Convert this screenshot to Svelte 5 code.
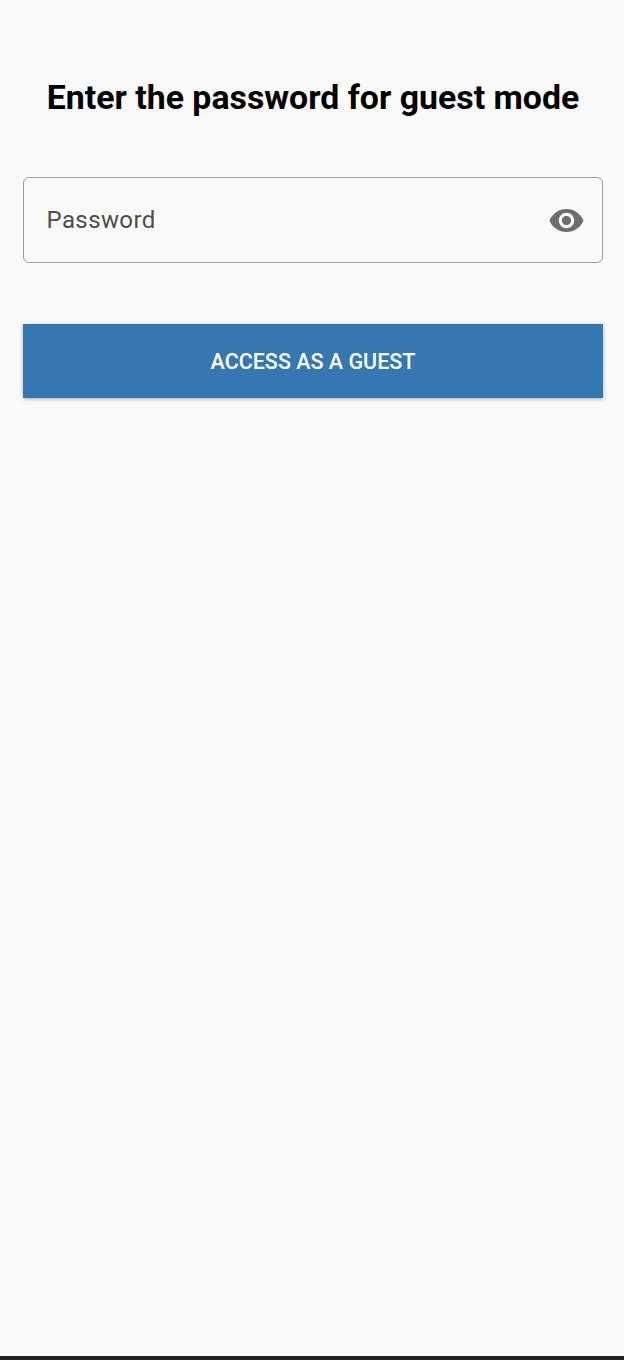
<script>
  let password = "";
  let visible = false;
</script>

<div class="screen">
  <main class="content">
    <h1 class="title">Enter the password for guest mode</h1>

    <label class="field">
      <input
        class="input"
        type={visible ? "text" : "password"}
        placeholder="Password"
        bind:value={password}
      />
      <button class="toggle" type="button" aria-label="Show password" on:click={() => (visible = !visible)}>
        <svg viewBox="0 0 24 24" width="37" height="37">
          <path fill="#6e6e6e" d="M12 4.5C7 4.5 2.73 7.61 1 12c1.73 4.39 6 7.5 11 7.5s9.27-3.11 11-7.5c-1.73-4.39-6-7.5-11-7.5zM12 17c-2.76 0-5-2.24-5-5s2.24-5 5-5 5 2.24 5 5-2.24 5-5 5zm0-8c-1.66 0-3 1.34-3 3s1.34 3 3 3 3-1.34 3-3-1.34-3-3-3z" />
        </svg>
      </button>
    </label>

    <button class="submit" type="button">Access as a guest</button>
  </main>
  <div class="nav-edge"></div>
</div>

<style>
  :global(body) {
    margin: 0;
    background: #fafafa;
  }

  .screen {
    display: flex;
    flex-direction: column;
    height: 1360px;
    font-family: Roboto, "Liberation Sans", sans-serif;
    background: #fafafa;
  }

  .content {
    flex: 1;
    display: flex;
    flex-direction: column;
    padding: 76px 21px 0 23px;
  }

  .title {
    margin: 0 0 57px;
    font-size: 33.85px;
    line-height: 44px;
    font-weight: 700;
    text-align: center;
    color: #000;
  }

  .field {
    display: flex;
    align-items: center;
    height: 86px;
    box-sizing: border-box;
    padding: 0 0 0 22.5px;
    border: 1.5px solid #9b9b9b;
    border-radius: 6px;
  }

  .input {
    flex: 1;
    min-width: 0;
    padding: 0;
    border: none;
    outline: none;
    background: transparent;
    font-family: inherit;
    font-size: 24px;
    letter-spacing: 0.4px;
    color: #424242;
  }

  .input::placeholder {
    color: #4d4d4d;
    opacity: 1;
  }

  .toggle {
    display: flex;
    margin-right: 17px;
    padding: 0;
    border: none;
    background: none;
  }

  .submit {
    height: 74px;
    margin-top: 61px;
    padding: 0;
    border: none;
    background: #3477b3;
    box-shadow: 0 1px 4px rgba(0, 0, 0, 0.3);
    font-family: inherit;
    font-size: 21.5px;
    font-weight: 500;
    text-transform: uppercase;
    color: #fff;
  }

  .nav-edge {
    height: 4px;
    background: #212121;
  }
</style>
